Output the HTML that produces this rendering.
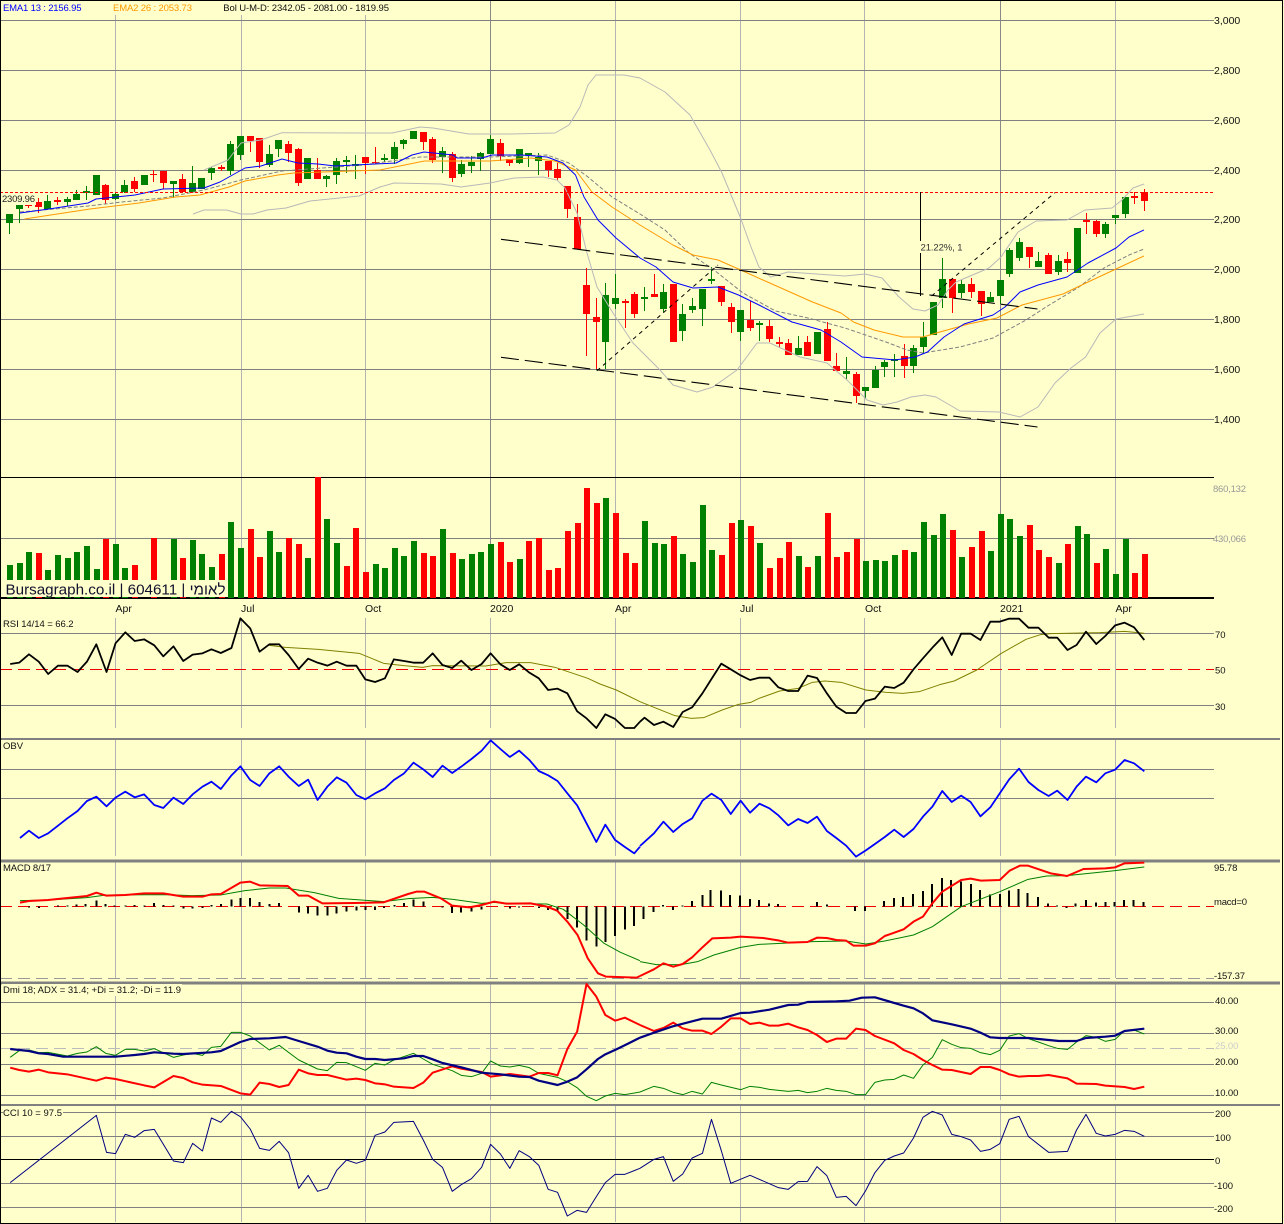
<!DOCTYPE html>
<html><head><meta charset="utf-8"><title>Bursagraph</title>
<style>
html,body{margin:0;padding:0;background:#ffffcc;width:1284px;height:1224px;overflow:hidden}
svg{display:block}
text{font-family:"Liberation Sans",Arial,sans-serif;font-size:9.5px;fill:#111}
.n{fill:none;vector-effect:non-scaling-stroke;stroke-linejoin:round}
.c{shape-rendering:crispEdges}
</style></head><body>
<svg width="1284" height="1224" viewBox="0 0 1284 1224" xmlns="http://www.w3.org/2000/svg">
<rect width="1284" height="1224" fill="#ffffcc"/>

<!-- vertical grid -->
<g class="c" fill="none" stroke-width="1">
<path stroke="#b4b4b4" d="M115.5 0V598M241.5 0V598M365.5 0V598M615.5 0V598M740.5 0V598M864.5 0V598M1115.5 0V598
M115.5 618V728M241.5 618V728M365.5 618V728M615.5 618V728M740.5 618V728M864.5 618V728M1115.5 618V728M490.5 618V728M1000.5 618V728
M115.5 739V856M241.5 739V856M365.5 739V856M490.5 739V856M615.5 739V856M740.5 739V856M864.5 739V856M1000.5 739V856M1115.5 739V856
M115.5 861V978M241.5 861V978M365.5 861V978M490.5 861V978M615.5 861V978M740.5 861V978M864.5 861V978M1000.5 861V978M1115.5 861V978
M115.5 983V1100M241.5 983V1100M365.5 983V1100M490.5 983V1100M615.5 983V1100M740.5 983V1100M864.5 983V1100M1000.5 983V1100M1115.5 983V1100
M115.5 1105V1222M241.5 1105V1222M365.5 1105V1222M490.5 1105V1222M615.5 1105V1222M740.5 1105V1222M864.5 1105V1222M1000.5 1105V1222M1115.5 1105V1222"/>
<path stroke="#8a8a8a" d="M490.5 0V598M1000.5 0V598"/>
<!-- horizontal grid -->
<path stroke="#808080" d="M0 20.5H1214M0 70.5H1214M0 120.5H1214M0 170.5H1214M0 219.5H1214M0 269.5H1214M0 319.5H1214M0 369.5H1214M0 419.5H1214
M0 538.5H1214
M0 633.5H1214M0 705.5H1214
M0 769.5H1214M0 798.5H1214
M0 1002.5H1214M0 1033.5H1214M0 1064.5H1214M0 1095.5H1214
M0 1112.5H1214M0 1136.5H1214M0 1183.5H1214M0 1207.5H1214"/>
<path stroke="#000" d="M0 1159.5H1214M0 477.5H1214"/>
<path stroke="#000" stroke-width="2" d="M0 598H1214"/>
<path stroke="#808080" stroke-width="2" d="M0 739H1280M0 1105H1280"/>
<path stroke="#808080" stroke-width="3" d="M0 861H1280M0 983H1280"/>
<path stroke="#999" stroke-dasharray="12 6" d="M0 978.5H1214"/>
<path stroke="#bbb" stroke-dasharray="12 6" d="M0 1048.5H1214"/>
<path stroke="#f00000" stroke-dasharray="12 6" d="M0 669.5H1214M0 906.5H1214"/>
</g>

<!-- volume -->
<g class="c" fill="none" stroke-width="6">
<path stroke="#008000" d="M10 565V598M20 563V598M29 552V598M48 570V598M58 555V598M68 558V598M77 552V598M87 546V598M97 569V598M116 544V598M125 568V598M174 539V598M193 540V598M202 554V598M212 567V598M231 522V598M241 548V598M270 531V598M279 552V598M308 558V598M327 519V598M337 543V598M376 564V598M385 568V598M395 548V598M404 556V598M414 541V598M443 529V598M462 559V598M472 554V598M481 552V598M491 544V598M520 559V598M606 498V598M645 521V598M655 543V598M664 544V598M683 554V598M693 562V598M703 505V598M712 550V598M741 520V598M760 543V598M799 556V598M818 556V598M866 561V598M876 560V598M885 561V598M895 555V598M914 552V598M924 522V598M934 535V598M943 514V598M962 557V598M991 551V598M1001 514V598M1010 519V598M1020 536V598M1059 563V598M1078 526V598M1087 534V598M1106 549V598M1116 574V598M1126 539V598"/>
<path stroke="#ff0000" d="M39 553V598M106 539V598M135 565V598M154 538V598M183 558V598M222 554V598M251 529V598M260 557V598M289 538V598M299 544V598M318 477V598M347 566V598M356 528V598M366 572V598M424 553V598M433 556V598M453 553V598M501 542V598M510 562V598M529 541V598M539 538V598M549 570V598M558 568V598M568 531V598M578 523V598M587 488V598M597 503V598M616 513V598M626 553V598M635 563V598M674 536V598M722 555V598M732 523V598M751 526V598M770 568V598M780 558V598M789 542V598M808 567V598M828 513V598M837 557V598M847 552V598M857 539V598M905 550V598M953 530V598M972 547V598M982 531V598M1030 525V598M1039 550V598M1049 557V598M1068 544V598M1097 563V598M1135 573V598M1145 554V598"/>
</g>
<rect x="5" y="580" width="222" height="17" fill="#ffffcc"/>
<text x="5.5" y="594.5" style="font-size:15.2px;fill:#10102e">Bursagraph.co.il | 604611 | לאומי</text>

<!-- candles: wicks -->
<g class="c" fill="none">
<path stroke="#008000" stroke-width="1" d="M9.5 214V234M19.5 205V223M47.5 195V210M67.5 197V206M76.5 190V200M86.5 186V200M115.5 192V200M124.5 180V193M173.5 181V198M192.5 166V192M211.5 167V180M230.5 141V175M240.5 136V160M269.5 145V167M278.5 140V157M326.5 175V187M336.5 158V184M346.5 156V173M355.5 155V179M384.5 154V162M394.5 142V164M403.5 139V149M442.5 147V173M461.5 160V177M471.5 156V173M480.5 152V171M490.5 135V154M519.5 149V164M528.5 153V167M538.5 153V175M605.5 283V369M615.5 274V309M644.5 287V311M663.5 284V312M682.5 304V341M692.5 298V313M702.5 289V326M711.5 267V284M740.5 310V341M759.5 321V341M798.5 336V355M846.5 357V379M865.5 387V399M875.5 366V388M884.5 360V377M894.5 354V377M913.5 345V373M923.5 322V354M942.5 258V308M961.5 280V298M990.5 292V302M1000.5 280V304M1009.5 248V277M1019.5 238V261M1038.5 252V267M1058.5 255V275M1105.5 222V238M1115.5 215V224M1125.5 197V218"/>
<path stroke="#ff0000" stroke-width="1" d="M28.5 205V208M38.5 198V213M57.5 197V205M105.5 184V204M134.5 177V192M153.5 170V182M163.5 171V189M182.5 174V193M221.5 165V171M250.5 136V152M259.5 138V168M288.5 141V162M298.5 148V186M317.5 158V179M365.5 157V174M375.5 147V164M423.5 132V150M432.5 137V163M452.5 152V182M500.5 139V161M509.5 159V166M548.5 161V177M557.5 163V180M567.5 186V218M577.5 204V249M586.5 268V356M596.5 298V369M625.5 299V328M634.5 292V318M654.5 274V297M721.5 286V306M731.5 303V333M750.5 301V331M769.5 320V342M779.5 337V348M788.5 339V355M807.5 336V356M827.5 322V361M836.5 353V371M856.5 372V403M904.5 344V378M952.5 279V313M971.5 278V298M981.5 291V316M1029.5 247V268M1048.5 253V274M1067.5 252V272M1086.5 213V234M1096.5 220V237M1134.5 192V204M1144.5 189V211"/>
<!-- candles: bodies -->
<path stroke="#008000" stroke-width="7" d="M9.5 214V223M19.5 205V209M47.5 201V209M67.5 199V202M76.5 194V200M86.5 191V193M96.5 175V195M115.5 194V199M124.5 185V192M144.5 175V185M173.5 181V184M192.5 183V192M201.5 178V189M211.5 168V173M230.5 144V171M240.5 136V155M269.5 154V165M278.5 140V149M307.5 158V179M326.5 176V179M336.5 161V175M346.5 160V162M355.5 164V166M384.5 158V160M394.5 147V159M403.5 140V144M413.5 131V139M442.5 151V157M461.5 164V174M471.5 162V166M480.5 153V159M490.5 139V154M519.5 149V163M528.5 153V155M538.5 157V161M605.5 295V342M615.5 298V304M644.5 297V299M663.5 292V309M682.5 314V331M692.5 306V310M702.5 289V309M711.5 279V281M740.5 310V332M759.5 323V325M798.5 348V355M817.5 332V354M846.5 371V374M865.5 387V391M875.5 370V388M884.5 362V367M894.5 359V361M913.5 348V366M923.5 337V347M933.5 302V335M942.5 279V298M961.5 284V293M990.5 297V302M1000.5 280V296M1009.5 250V274M1019.5 242V258M1038.5 261V267M1058.5 261V272M1077.5 228V273M1105.5 224V234M1115.5 215V218M1125.5 197V214"/>
<path stroke="#ff0000" stroke-width="7" d="M28.5 205V206M38.5 202V207M57.5 200V202M105.5 185V200M134.5 181V189M153.5 174V175M163.5 171V183M182.5 179V192M221.5 167V169M250.5 136V141M259.5 138V162M288.5 144V153M298.5 149V183M317.5 170V179M365.5 157V163M375.5 162V163M423.5 132V142M432.5 139V160M452.5 154V178M500.5 143V156M509.5 159V163M548.5 161V170M557.5 169V178M567.5 186V209M577.5 217V249M586.5 285V314M596.5 317V322M625.5 301V303M634.5 294V314M654.5 294V297M673.5 284V342M721.5 286V302M731.5 307V322M750.5 320V328M769.5 326V339M779.5 342V344M788.5 343V355M807.5 342V356M827.5 329V361M836.5 366V371M856.5 374V396M904.5 356V366M952.5 279V298M971.5 284V292M981.5 291V304M1029.5 247V257M1048.5 255V274M1067.5 259V263M1086.5 220V222M1096.5 221V234M1134.5 196V198M1144.5 192V201"/>
</g>

<!-- Bollinger -->
<g fill="none" stroke-linejoin="round">
<polyline stroke="#b8b8b8" stroke-width="1" points="204,170 228,160 241,143 261,140 282,132.7 294,132.7 363,133 392,133 420,127 433,128 469,134 510,134 555,133 569,125 580,107 588,85 596,75 624,75 640,78 665,92 690,115 710,150 722,173 740.6,218 751,247 759,267 770.6,277 788,272 845,276 865,274 882,278 899,297 913,309 925,311 938,305 948,290 956,282 989,268 1001,257 1018,232 1036,221 1067,220 1085,210 1112,208 1122,200 1133,188 1144,184"/>
<polyline stroke="#b8b8b8" stroke-width="1" points="193,214 204,210 226.5,210 241,214 253,214 267,210 286,208 310,201 359,196 380,187 394,183 441,184 461,187 490,183 514,178 543,177 557,180 565,188 577,213 587,253 597,287 613,313 633,343 660,370 673,385 697,392 713,387 737,370 757,343 770,343 800,357 827,363 847,380 867,400 883,405 897,402 911,397 925,395 936,397 960,411 999,412 1020,417 1038,407 1055,383 1071,368 1085.6,357 1100,333 1116,319 1144,314"/>
<polyline stroke="#808080" stroke-width="1" stroke-dasharray="4 2" points="20,212 88,206 122,202 163,198 204,190 241,180 282,171 363,165 420,157 490,157 547,155 569,163 588,177 612,197 640,214 665,230 689,253 714,270 743,293 775.5,311 808,318 845,328 886,342 907,350 923,353 960,347 993,338 1026,320 1046,307 1079,287 1104,268 1129,255 1144,249"/>
<!-- EMAs -->
<polyline stroke="#ff9900" stroke-width="1" points="24.5,219 90,209 139,203 175.5,197 200,195 229,187 245,181 278,175 294,173 380,170 424.5,161 490,161 531,158 555,161 575.5,170 592,192 612,207 640,225 673,245 693,255 718,260 738.5,269 763,280 812.5,302 841,313 853.5,322 874,330 903,337 923,337 940,332 968.5,324 997,318 1022,305 1063,294 1088,282 1116,269 1144,256"/>
<polyline stroke="#0000ff" stroke-width="1" points="20,213 49,209 88,203 96,199 135,195 163,189 204,188 220,182 245,168 261,166 282,159 298,163 318,164 335,166 375,164 396,163 412,155 424,152 453,155 457,158 482,158 492,155 522,155 547,157 563,163 575.5,175 584,197 598,220 616,238 640,258 656,267 673,282 693,288 718,287 738.5,295 759,305 792,322 821,330 841,342 862,357 895,360 915,357 927.5,352 944,337 964,324 993,315 1005,307 1020,292 1038,285 1067,277 1088,263 1116,248 1129,237 1144,230"/>
<!-- resistance line and trend lines -->
<path stroke="#ff0000" stroke-width="1" stroke-dasharray="3 2" class="c" d="M0 192.5H1214"/>
<path stroke="#000" stroke-width="1.1" stroke-dasharray="18 6" d="M501 239.3L1037.5 309M501 357.3L1037.5 427"/>
<path stroke="#000" stroke-width="1" stroke-dasharray="4 4" d="M597 370.7L718 265M931.6 296L1055 192.7"/>
<path stroke="#000" stroke-width="1" class="c" d="M920.5 192V296"/>
</g>

<!-- RSI -->
<g transform="translate(0,610) scale(.40816,.33333)">
<polyline class="n" stroke="#808000" stroke-width="1" points="660,106 700,112 780,118 880,130 910,145 940,160 990,167 1035,172 1060,167 1190,168 1240,158 1300,158 1360,172 1440,205 1470,222 1510,240 1568,275"/>
<polyline class="n" stroke="#000" stroke-width="1.8" points="25,162 47,158 71,133 95,155 118,192 142,167 165,167 190,186 213,155 236,103 261,186 283,100 307,67 330,93 353,88 378,106 400,139 425,109 449,153 472,134 496,130 518,118 541,129 567,114 589,25 613,55 636,125 660,103 684,103 707,135 732,177 755,146 778,158 802,167 825,155 849,167 873,167 895,208 919,216 943,205 965,148 990,153 1013,158 1037,158 1060,130 1084,165 1108,174 1130,152 1155,180 1180,162 1202,130 1226,163 1249,180 1272,163 1297,188 1320,205 1343,240 1366,236 1390,250 1414,304 1437,325 1461,354 1483,313 1507,327 1531,354 1554,354 1568,335"/>
</g>
<g transform="translate(640,610) scale(.41068,.33333)">
<polyline class="n" stroke="#808000" stroke-width="1" points="0,275 40,295 85,317 125,325 155,323 200,300 240,283 270,277 290,265 340,243 385,235 420,217 450,213 490,217 550,240 600,247 640,250 680,245 730,224 765,213 820,180 880,130 940,88 975,74 1000,71 1120,68 1180,64 1228,70"/>
<polyline class="n" stroke="#000" stroke-width="1.8" points="0,335 11,323 34,345 57,335 81,351 104,306 127,292 152,250 174,207 198,161 221,178 245,196 268,210 291,203 315,203 337,232 361,243 385,243 408,197 431,204 455,250 478,290 502,309 526,309 549,273 572,266 596,230 619,234 642,218 666,178 689,145 712,113 736,82 759,135 782,71 805,71 829,90 853,35 876,35 899,26 923,26 946,53 970,53 995,83 1016,83 1041,120 1063,105 1086,65 1111,102 1133,78 1157,46 1180,38 1203,52 1228,90"/>
</g>

<!-- OBV -->
<g transform="translate(0,610) scale(.40816,.33333)">
<polyline class="n" stroke="#0000ff" stroke-width="1.8" points="49,684 71,662 95,684 118,670 142,647 165,625 190,603 213,573 236,560 261,589 283,563 307,545 330,562 353,553 378,585 400,594 425,563 449,582 472,553 496,530 518,515 541,537 567,496 589,469 613,510 636,528 660,490 684,469 707,500 732,528 755,509 778,570 802,530 825,502 849,518 873,555 895,568 919,550 943,535 965,510 990,490 1013,458 1037,478 1060,501 1084,467 1108,489 1130,470 1155,447 1180,422 1202,391 1226,417 1249,441 1272,422 1297,450 1320,483 1343,496 1366,513 1390,550 1414,586 1437,640 1461,696 1483,644 1507,690 1531,711 1554,730 1568,710"/>
</g>
<g transform="translate(640,610) scale(.41068,.33333)">
<polyline class="n" stroke="#0000ff" stroke-width="1.8" points="0,708 34,670 57,635 81,666 104,642 127,625 152,572 174,551 198,570 221,612 245,572 268,608 291,581 315,595 337,616 361,646 385,627 408,639 431,620 455,663 478,684 502,707 526,740 549,722 572,702 596,681 619,659 642,681 666,657 689,620 712,590 736,543 759,576 782,557 805,576 829,619 853,592 876,550 899,508 923,476 946,516 970,540 995,558 1016,542 1041,570 1063,530 1086,500 1111,517 1133,490 1157,479 1180,450 1203,460 1228,484"/>
</g>

<!-- MACD -->
<g transform="translate(0,850) scale(.40816,.33333)">
<path class="n c" stroke="#000" stroke-width="2" d="M71 170V172M95 170V174M142 170V167M165 170V167M188 170V163M210 170V162M236 170V152M259 170V162M281 170V166M307 170V166M330 170V165M354 170V166M377 170V159M400 170V165M425 170V166M449 170V176M472 170V176M496 170V174M518 170V165M541 170V162M567 170V149M589 170V144M613 170V144M636 170V156M660 170V162M684 170V159M732 170V188M755 170V190M778 170V197M802 170V197M825 170V191M849 170V185M873 170V182M895 170V180M919 170V180M941 170V174M966 170V165M990 170V159M1013 170V149M1037 170V155M1084 170V172M1108 170V189M1130 170V188M1155 170V185M1180 170V179M1249 170V175M1272 170V172M1320 170V174M1343 170V180M1366 170V185M1390 170V207M1414 170V233M1437 170V272M1461 170V290M1483 170V276M1507 170V258M1531 170V239M1553 170V228"/>
<polyline class="n" stroke="#008000" stroke-width="1" points="49,152 118,150 213,143 260,135 400,134 470,137 540,135 600,122 660,114 700,114 770,128 830,145 940,155 1000,146 1060,142 1110,148 1180,160 1210,157 1260,161 1340,162 1380,178 1430,225 1480,280 1520,307 1568,332"/>
<polyline class="n" stroke="#ff0000" stroke-width="2" points="49,158 71,153 118,150 165,144 213,138 236,128 261,137 307,135 353,130 400,130 449,140 496,140 518,133 541,132 589,98 613,95 636,106 705,108 732,137 755,137 790,160 870,159 940,157 1000,132 1020,125 1040,125 1080,145 1108,167 1150,172 1180,165 1210,155 1240,161 1300,160 1340,170 1365,182 1390,215 1415,255 1440,325 1465,370 1485,380 1560,383 1568,378"/>
</g>
<g transform="translate(640,850) scale(.41068,.33333)">
<path class="n c" stroke="#000" stroke-width="2" d="M9 170V207M33 170V186M56 170V165M80 170V180M104 170V166M127 170V153M152 170V135M172 170V120M197 170V122M219 170V135M243 170V137M268 170V147M290 170V150M314 170V160M336 170V162M431 170V156M455 170V163M524 170V183M548 170V183M594 170V153M618 170V144M641 170V141M665 170V132M689 170V123M711 170V102M735 170V84M757 170V90M782 170V95M806 170V102M828 170V120M852 170V133M876 170V132M898 170V122M922 170V117M944 170V129M969 170V141M993 170V160M1015 170V167M1039 170V174M1061 170V160M1086 170V150M1110 170V157M1133 170V156M1156 170V156M1179 170V150M1202 170V150M1226 170V156"/>
<polyline class="n" stroke="#008000" stroke-width="1" points="0,335 40,344 100,344 140,335 180,315 245,292 290,283 361,279 420,275 502,273 550,282 596,273 666,255 712,230 782,170 876,125 945,88 990,78 1040,77 1157,62 1228,51"/>
<polyline class="n" stroke="#ff0000" stroke-width="2" points="0,378 34,358 57,340 81,350 104,342 127,322 152,292 176,265 221,263 245,260 300,264 340,272 361,278 408,276 431,263 455,264 478,270 502,272 520,287 550,287 572,280 596,258 642,238 666,215 689,200 712,160 736,125 782,90 805,86 830,92 876,90 900,62 925,47 945,47 1000,70 1040,78 1080,57 1133,55 1157,52 1180,40 1228,38"/>
</g>

<!-- DMI + CCI left -->
<g transform="translate(0,980) scale(.40816,.33333)">
<polyline class="n" stroke="#008000" stroke-width="1" points="25,232 47,212 71,210 95,218 118,217 165,228 190,220 213,216 236,200 259,220 283,226 307,208 330,208 353,213 378,206 425,232 449,225 472,220 496,226 518,202 541,199 567,157 589,157 613,168 660,210 684,196 732,240 778,267 802,272 825,247 849,248 895,271 919,250 943,255 965,240 1013,220 1037,237 1060,253 1108,272 1130,286 1155,290 1180,280 1202,243 1226,258 1249,261 1272,256 1297,263 1320,280 1366,292 1390,305 1414,323 1437,349 1461,362 1483,348 1507,340 1531,344 1568,336"/>
<polyline class="n" stroke="#ff0000" stroke-width="2" points="25,263 47,270 71,275 95,269 118,277 165,283 236,302 259,293 283,297 353,316 378,322 425,288 449,294 472,307 496,314 541,318 589,340 613,344 636,308 660,312 684,321 707,315 732,269 755,280 778,285 802,285 849,299 873,296 895,300 919,310 943,313 965,320 1013,324 1037,308 1060,278 1108,259 1130,266 1180,276 1202,290 1226,286 1249,282 1297,290 1320,279 1343,279 1366,286 1390,207 1414,155 1437,12 1461,50 1483,105 1507,122 1531,113 1568,135"/>
<polyline class="n" stroke="#000080" stroke-width="2.2" points="25,207 71,213 95,220 118,222 155,230 283,230 330,225 353,222 378,217 425,221 449,222 518,217 541,213 589,186 613,177 660,175 700,171 732,183 778,200 802,212 825,218 849,220 873,230 895,237 919,237 943,240 990,235 1013,228 1037,228 1060,238 1084,249 1130,262 1180,278 1226,283 1272,290 1297,291 1320,302 1366,315 1390,305 1414,292 1437,268 1465,237 1483,223 1510,208 1540,190 1568,173"/>
<polyline class="n" stroke="#000080" stroke-width="1" points="25,608 236,406 261,517 283,521 307,463 330,472 353,452 378,448 425,543 449,548 472,490 496,513 518,414 541,427 567,394 589,410 613,447 636,505 660,511 684,484 707,518 732,625 755,586 778,634 802,625 825,571 849,540 873,550 895,541 919,466 943,456 965,427 1013,424 1037,480 1060,538 1084,562 1108,634 1130,614 1155,596 1180,562 1202,493 1226,522 1249,565 1272,512 1297,530 1320,556 1343,628 1366,637 1390,708 1414,691 1437,697 1461,650 1483,608 1507,583 1531,583 1568,565"/>
</g>
<!-- DMI + CCI right -->
<g transform="translate(640,980) scale(.41068,.33333)">
<polyline class="n" stroke="#008000" stroke-width="1" points="0,336 34,319 57,325 81,337 104,344 127,334 152,342 174,307 198,315 245,329 268,319 291,322 315,328 361,334 385,331 408,338 431,334 455,325 478,331 502,334 526,344 549,344 572,307 596,300 619,298 642,285 666,295 689,255 712,232 736,179 759,193 782,203 805,205 829,218 853,224 876,211 899,168 923,161 946,176 970,186 995,197 1016,205 1041,208 1063,186 1086,167 1111,172 1133,184 1157,178 1180,152 1203,150 1228,162"/>
<polyline class="n" stroke="#ff0000" stroke-width="2" points="0,135 34,153 57,144 81,128 104,145 127,152 152,152 174,162 198,140 221,115 245,115 268,132 291,128 315,137 337,137 361,131 385,142 408,150 431,165 455,186 478,176 502,176 526,146 549,150 572,168 619,190 642,210 666,222 689,240 712,255 736,269 759,270 805,282 829,261 853,261 876,270 899,283 923,290 946,288 970,288 995,285 1041,295 1063,311 1111,312 1133,317 1180,321 1203,327 1228,320"/>
<polyline class="n" stroke="#000080" stroke-width="2.2" points="0,173 34,158 80,139 127,124 152,116 198,116 245,99 268,98 315,89 361,75 385,74 408,66 478,64 510,62 540,53 572,52 642,77 666,85 689,100 712,121 759,133 805,146 829,158 853,172 876,174 946,174 1020,183 1063,183 1086,174 1133,170 1157,167 1180,153 1228,146"/>
<polyline class="n" stroke="#000080" stroke-width="1" points="0,565 34,538 57,530 81,604 104,582 127,534 152,520 174,418 198,512 221,610 268,586 315,611 337,623 361,628 385,605 408,604 431,560 455,587 478,652 502,649 526,677 549,633 572,578 596,541 619,528 642,519 666,474 689,412 712,394 736,405 759,463 782,470 805,480 829,514 853,508 876,491 899,418 923,409 946,470 995,517 1041,514 1063,450 1086,403 1111,460 1133,468 1157,463 1180,451 1203,454 1228,469"/>
</g>

<!-- text backgrounds -->
<g fill="#ffffcc">
<rect x="1" y="1" width="390" height="14"/>
<rect x="2" y="193" width="34" height="12"/>
<rect x="920" y="241" width="46" height="12"/>
<rect x="2" y="984" width="180" height="12"/>
<rect x="3" y="1106" width="60" height="12"/>
</g>

<!-- texts -->
<text x="3" y="11" textLength="78.5" style="fill:#0000ff">EMA1 13 : 2156.95</text>
<text x="113" y="11" textLength="79" style="fill:#ff9900">EMA2 26 : 2053.73</text>
<text x="223.3" y="11" textLength="165.7" style="fill:#111">Bol U-M-D: 2342.05 - 2081.00 - 1819.95</text>
<text x="2" y="202" textLength="33" style="fill:#222">2309.96</text>
<text x="920.5" y="250.5" textLength="42" style="fill:#333">21.22%, 1</text>

<text x="115.5" y="612" style="font-size:10.5px">Apr</text>
<text x="241" y="612" style="font-size:10.5px">Jul</text>
<text x="365" y="612" style="font-size:10.5px">Oct</text>
<text x="490" y="612" style="font-size:10.5px">2020</text>
<text x="615" y="612" style="font-size:10.5px">Apr</text>
<text x="740" y="612" style="font-size:10.5px">Jul</text>
<text x="865" y="612" style="font-size:10.5px">Oct</text>
<text x="1000" y="612" style="font-size:10.5px">2021</text>
<text x="1115.5" y="612" style="font-size:10.5px">Apr</text>

<text x="1214" y="24" style="font-size:10.5px">3,000</text>
<text x="1214" y="74" style="font-size:10.5px">2,800</text>
<text x="1214" y="124" style="font-size:10.5px">2,600</text>
<text x="1214" y="174" style="font-size:10.5px">2,400</text>
<text x="1214" y="223" style="font-size:10.5px">2,200</text>
<text x="1214" y="273" style="font-size:10.5px">2,000</text>
<text x="1214" y="323" style="font-size:10.5px">1,800</text>
<text x="1214" y="373" style="font-size:10.5px">1,600</text>
<text x="1214" y="423" style="font-size:10.5px">1,400</text>
<text x="1213" y="492" textLength="33" style="fill:#999">860,132</text>
<text x="1213" y="542" textLength="33" style="fill:#999">430,066</text>

<text x="3" y="627" textLength="70.6">RSI 14/14 = 66.2</text>
<text x="1215" y="638">70</text>
<text x="1215" y="673.5">50</text>
<text x="1215" y="710">30</text>

<text x="3" y="749">OBV</text>

<text x="3" y="871" textLength="48">MACD 8/17</text>
<text x="1214" y="871" textLength="23.4">95.78</text>
<text x="1214" y="905" textLength="33">macd=0</text>
<text x="1214" y="979" textLength="31">-157.37</text>

<text x="3" y="993" textLength="178">Dmi 18; ADX = 31.4; +Di = 31.2; -Di = 11.9</text>
<text x="1215" y="1004" textLength="23.4">40.00</text>
<text x="1215" y="1034" textLength="23.4">30.00</text>
<text x="1215" y="1049" textLength="23.4" style="fill:#ccc">25.00</text>
<text x="1215" y="1065" textLength="23.4">20.00</text>
<text x="1215" y="1096" textLength="23.4">10.00</text>

<text x="3" y="1116" textLength="59">CCI 10 = 97.5</text>
<text x="1215" y="1117">200</text>
<text x="1215" y="1141">100</text>
<text x="1215" y="1164">0</text>
<text x="1214" y="1189">-100</text>
<text x="1214" y="1212">-200</text>

<!-- outer border -->
<path class="c" fill="none" stroke="#000" stroke-width="1" d="M.5 .5H1282.5V1223.5H.5Z"/>
</svg>
</body></html>
